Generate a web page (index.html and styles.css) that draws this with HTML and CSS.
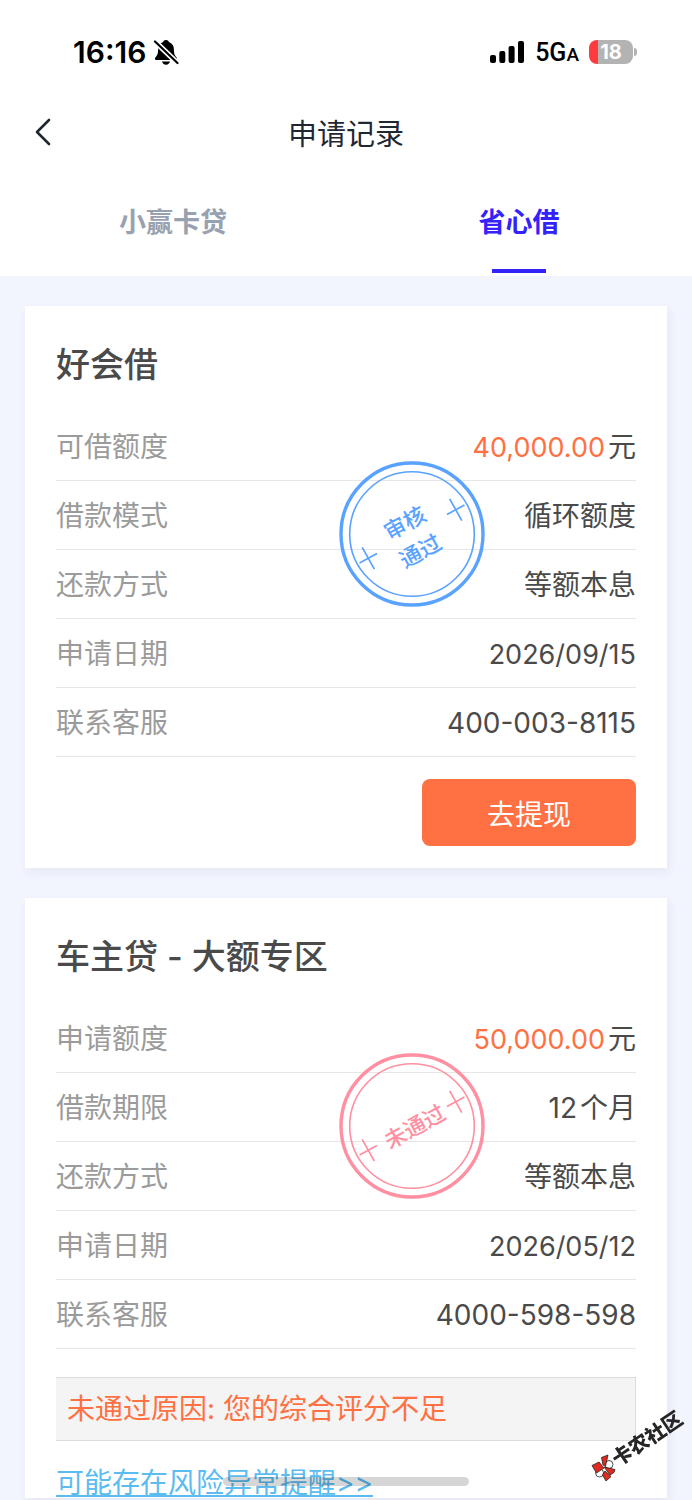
FILE: index.html
```html
<!DOCTYPE html>
<html lang="zh-CN">
<head>
<meta charset="utf-8">
<meta name="viewport" content="width=device-width, initial-scale=1">
<title>申请记录</title>
<link rel="stylesheet" href="styles.css">
</head>
<body>
<header class="top">
  <div class="status">
    <div class="status-left">
      <span class="clock">16:16</span>
      <svg class="bell" width="26" height="28" viewBox="0 0 26 28" aria-hidden="true">
        <path d="M13 2c-1.700 0-2.600.9-2.800 2C6.600 5.200 5.100 8 5.100 11.500c0 4.500-1 6-2.700 7.900-.9 1.100-.6 2.600 1 2.600h19.200c1.600 0 1.900-1.500 1-2.600-1.700-1.900-2.700-3.400-2.700-7.900 0-3.500-1.500-6.300-5.100-7.500C15.600 2.900 14.700 2 13 2zM9 23.500h8c-.4 2-2 3.200-4 3.200s-3.600-1.200-4-3.200z"/>
        <path d="M2 3.500 24.500 25" stroke="#fff" stroke-width="5.400"/>
        <path d="M2 3.500 24.500 25" stroke="#000" stroke-width="2.200" stroke-linecap="round"/>
      </svg>
    </div>
    <div class="status-right">
      <svg width="35" height="22" viewBox="0 0 35 22" aria-hidden="true">
        <rect x="0" y="14" width="6" height="8" rx="2"/>
        <rect x="9.300" y="10" width="6" height="12" rx="2"/>
        <rect x="18.600" y="5" width="6" height="17" rx="2"/>
        <rect x="28" y="0" width="6" height="22" rx="2"/>
      </svg>
      <span class="network">5G<small>A</small></span>
      <span class="battery"><span class="battery-level">18</span></span>
    </div>
  </div>
  <nav class="navbar">
    <button class="back" type="button" aria-label="返回">
      <svg width="16" height="28" viewBox="0 0 16 28" aria-hidden="true"><path d="M14 2 2 14l12 12" fill="none" stroke="#1f2733" stroke-width="2.600" stroke-linecap="round" stroke-linejoin="round"/></svg>
    </button>
    <h1 class="page-title">申请记录</h1>
  </nav>
  <div class="tabs" role="tablist">
    <button class="tab" type="button" role="tab" aria-selected="false">小赢卡贷</button>
    <button class="tab tab-active" type="button" role="tab" aria-selected="true">省心借</button>
  </div>
</header>

<main class="records">
  <section class="card">
    <h2 class="card-title">好会借</h2>
    <div class="details">
      <dl class="rows">
        <div class="row"><dt>可借额度</dt><dd><span class="amount">40,000.00</span>元</dd></div>
        <div class="row"><dt>借款模式</dt><dd>循环额度</dd></div>
        <div class="row"><dt>还款方式</dt><dd>等额本息</dd></div>
        <div class="row"><dt>申请日期</dt><dd class="date">2026/09/15</dd></div>
        <div class="row"><dt>联系客服</dt><dd>400-003-8115</dd></div>
      </dl>
      <svg class="stamp stamp-pass" width="148" height="148" viewBox="-74 -74 148 148" role="img" aria-label="审核通过">
        <circle r="71" stroke-width="3.400"/>
        <circle r="62.300" stroke-width="1.600"/>
        <g transform="rotate(-29)">
          <path d="M-60 0h20M-50-12.500v25M40 0h20M50-12.500v25" stroke-width="1.700"/>
          <text x="-1" y="-5">审核</text>
          <text x="-1" y="27">通过</text>
        </g>
      </svg>
    </div>
    <button class="withdraw" type="button">去提现</button>
  </section>

  <section class="card card-rejected">
    <h2 class="card-title">车主贷 - 大额专区</h2>
    <div class="details">
      <dl class="rows">
        <div class="row"><dt>申请额度</dt><dd><span class="amount">50,000.00</span>元</dd></div>
        <div class="row"><dt>借款期限</dt><dd><span class="term">12</span>个月</dd></div>
        <div class="row"><dt>还款方式</dt><dd>等额本息</dd></div>
        <div class="row"><dt>申请日期</dt><dd class="date">2026/05/12</dd></div>
        <div class="row"><dt>联系客服</dt><dd>4000-598-598</dd></div>
      </dl>
      <svg class="stamp stamp-fail" width="148" height="148" viewBox="-74 -74 148 148" role="img" aria-label="未通过">
        <circle r="71" stroke-width="3.400"/>
        <circle r="62.300" stroke-width="1.600"/>
        <g transform="rotate(-29)">
          <path d="M-60 0h20M-50-12.500v25M40 0h20M50-12.500v25" stroke-width="1.700"/>
          <text x="2" y="10">未通过</text>
        </g>
      </svg>
    </div>
    <p class="reason">未通过原因: 您的综合评分不足</p>
    <a class="risk" href="#risk">可能存在风险异常提醒&gt;&gt;</a>
  </section>
</main>

<div class="home-indicator"></div>
<svg class="watermark" width="108" height="84" viewBox="0 0 108 84" role="img" aria-label="卡农社区">
  <g stroke="#222" stroke-width=".8" stroke-linejoin="round">
    <circle cx="25" cy="64.500" r="4" fill="#fff"/>
    <circle cx="15.600" cy="73" r="4" fill="#fff"/>
    <path d="M8 65.500 15 62l5 6-7.500 5zM17.500 57.500 24 55l-2.500 11-2.500-1zM20 67l11 2.500-1 3-4 2.500zM18.500 75l2.500-4 6 5.500-5 4.500z" fill="#e02b20"/>
  </g>
  <text transform="translate(34 67) rotate(-34)">卡农社区</text>
</svg>
</body>
</html>
```
FILE: styles.css
```css
* {
  box-sizing: border-box;
}

body {
  margin: 0;
  background: #f2f5fe;
  color: #4a4a4a;
  font-family: Inter, "Noto Sans CJK SC", sans-serif;
  font-size: 28px;
}

h1, h2, p, dl, dd {
  margin: 0;
}

button {
  border: 0;
  padding: 0;
  background: none;
  font: inherit;
  cursor: pointer;
}

.top {
  background: #fff;
}

.status {
  display: flex;
  justify-content: space-between;
  align-items: center;
  height: 88px;
  padding: 16px 59px 0 73px;
  color: #000;
}

.status-left,
.status-right {
  display: flex;
  align-items: center;
}

.status-left {
  gap: 7px;
}

.status-right {
  gap: 10px;
}

.clock {
  font-size: 30px;
  font-weight: 600;
}

.network {
  font-family: Roboto, sans-serif;
  font-size: 25px;
  font-weight: 500;
}

.network small {
  font-size: 19px;
}

.battery {
  position: relative;
}

.battery::after {
  content: "";
  position: absolute;
  top: 8px;
  right: -4px;
  width: 3px;
  height: 8px;
  border-radius: 0 4px 4px 0;
  background: #b3b3b3;
}

.battery-level {
  display: block;
  width: 44px;
  border-radius: 8px;
  background: linear-gradient(90deg, #ff3b40 9px, #b3b3b3 9px);
  color: #fff;
  font-size: 20px;
  font-weight: 700;
  line-height: 24px;
  text-align: center;
}

.navbar {
  display: grid;
  grid-template-columns: 88px 1fr 88px;
  align-items: center;
  height: 88px;
}

.back {
  display: flex;
  padding-left: 35px;
}

.page-title {
  color: #1f2733;
  font-size: 29px;
  font-weight: 400;
  text-align: center;
}

.tabs {
  display: grid;
  grid-template-columns: 1fr 1fr;
  height: 100px;
}

.tab {
  position: relative;
  padding-bottom: 12px;
  color: #98a1af;
  font-size: 27px;
  font-weight: 700;
}

.tab-active {
  color: #3322fa;
}

.tab-active::after {
  content: "";
  position: absolute;
  bottom: 3px;
  left: calc(50% - 27px);
  width: 54px;
  height: 4px;
  background: #3322fa;
}

.records {
  display: flex;
  flex-direction: column;
  gap: 30px;
  padding: 30px 25px 2px;
}

.card {
  display: flex;
  flex-direction: column;
  padding: 32px 31px 22px;
  background: #fff;
  box-shadow: 2px 4px 10px rgba(50, 60, 90, 0.07);
}

.card-rejected {
  padding-bottom: 0;
}

.card-title {
  margin-bottom: 20px;
  font-size: 34px;
  font-weight: 500;
  line-height: 54px;
}

.details {
  position: relative;
}

.row {
  display: flex;
  justify-content: space-between;
  padding-top: 3px;
  border-bottom: 1px solid #e6e6e6;
  line-height: 65px;
}

.row dt {
  color: #9b9b9b;
}

.date {
  font-size: 27px;
}

.amount {
  margin-right: 3px;
  color: #ff7042;
  font-size: 27px;
}

.term {
  margin-right: 3px;
}

.stamp {
  position: absolute;
  top: 48px;
  left: calc(50% + 66px - 74px);
  fill: none;
}

.stamp text {
  stroke: none;
  font-size: 22px;
  font-weight: 500;
  text-anchor: middle;
}

.stamp-pass {
  stroke: #5aa2ff;
}

.stamp-pass text {
  fill: #5aa2ff;
}

.stamp-fail {
  stroke: #ff8fa1;
}

.stamp-fail text {
  fill: #ff8fa1;
}

.withdraw {
  align-self: flex-end;
  width: 214px;
  height: 67px;
  margin-top: 22px;
  border-radius: 8px;
  background: #ff7042;
  color: #fff;
}

.reason {
  margin-top: 28px;
  padding: 0 11px;
  border: 1px solid #dcdcdc;
  border-left: 0;
  background: #f4f4f4;
  color: #ff7042;
  line-height: 62px;
}

.risk {
  align-self: flex-start;
  margin-top: 28px;
  color: #5cbcf0;
  line-height: 29px;
  text-decoration-thickness: 2px;
  text-underline-offset: 2px;
}

.home-indicator {
  position: fixed;
  bottom: 14px;
  left: 50%;
  width: 246px;
  height: 9px;
  border-radius: 5px;
  background: rgba(0, 0, 0, 0.16);
  transform: translateX(-50%);
}

.watermark {
  position: fixed;
  right: 0;
  bottom: 16px;
}

.watermark text {
  fill: #262626;
  font-size: 20px;
  font-weight: 900;
}
```
